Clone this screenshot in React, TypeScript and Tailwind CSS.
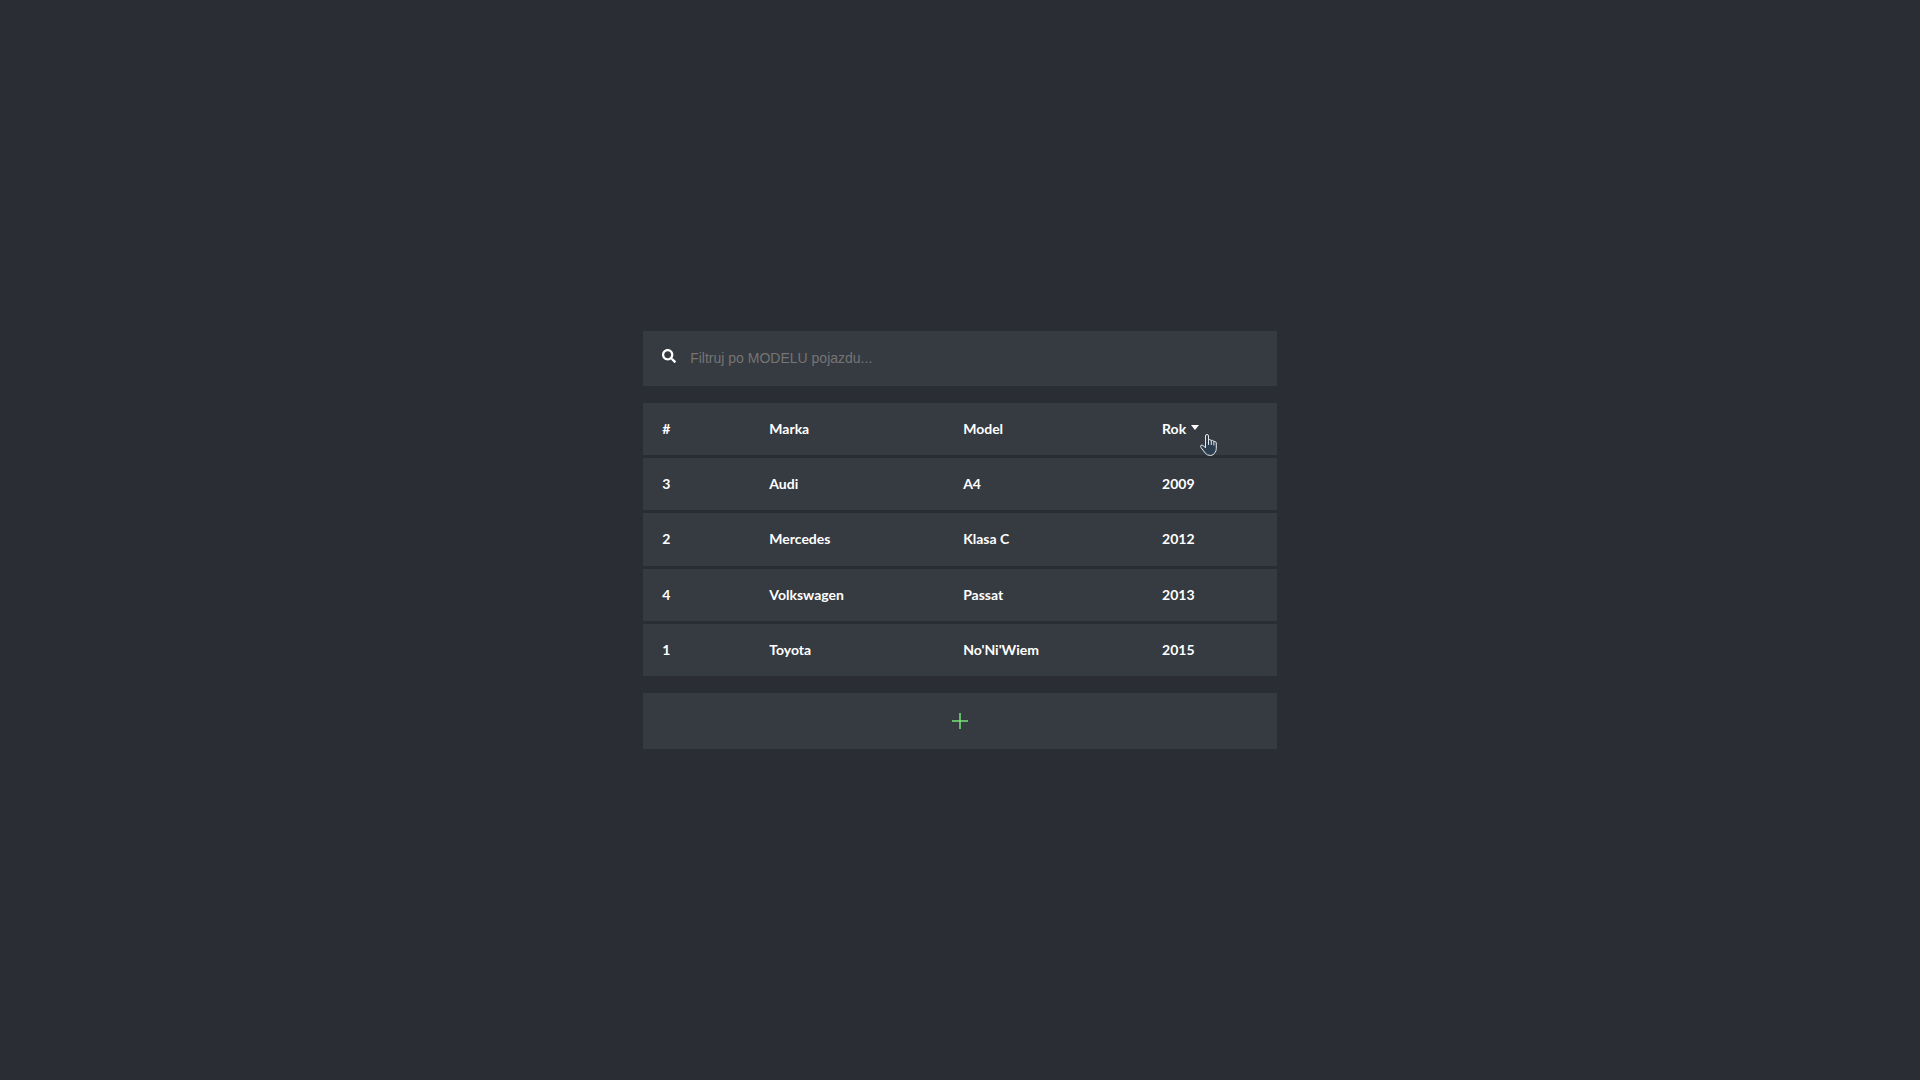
import { useState } from "react";
import { FaSearch } from "react-icons/fa";

type Vehicle = { id: number; brand: string; model: string; year: number };

const vehicles: Vehicle[] = [
  { id: 3, brand: "Audi", model: "A4", year: 2009 },
  { id: 2, brand: "Mercedes", model: "Klasa C", year: 2012 },
  { id: 4, brand: "Volkswagen", model: "Passat", year: 2013 },
  { id: 1, brand: "Toyota", model: "No'Ni'Wiem", year: 2015 },
];

function HandPointer() {
  return (
    <svg
      aria-hidden="true"
      viewBox="0 0 17 22"
      className="pointer-events-none absolute top-[15px] left-[38px] h-[22px] w-[17px]"
      fill="#2c3e50"
      stroke="#e3e7ea"
      strokeWidth="1"
      strokeLinejoin="round"
      strokeLinecap="round"
    >
      <path d="M5.5 13.5V2Q5.500 .5 7 .5T8.500 2V6.500Q8.800 5.500 9.800 5.500T11.300 7Q11.500 6.200 12.500 6.300T13.900 7.800Q14.300 7.200 15.200 7.500T16.300 9V14.500Q16.300 17 15 18.500Q13.500 21.500 10.500 21.500Q7 21.500 5.200 19L1 13.500Q0 12 1 11.300T3.500 11.800Z" />
      <path fill="none" d="M8.500 6.500V10.500M11.300 7V10.500M13.900 7.800V11" />
    </svg>
  );
}

export default function App() {
  const [query, setQuery] = useState("");
  const rows = vehicles.filter((v) => v.model.toLowerCase().includes(query.toLowerCase()));

  return (
    <main className="flex min-h-screen items-center justify-center bg-[#2b2d35] font-['Lato',sans-serif] text-sm font-bold text-white">
      <div className="flex w-[33%] flex-col">
        <label className="flex h-[55px] items-center bg-[#363a41] px-[19px] pb-0.5">
          <FaSearch aria-hidden="true" className="mb-1 size-3.5 shrink-0" />
          <input
            type="text"
            aria-label="Filtruj po MODELU pojazdu"
            placeholder="Filtruj po MODELU pojazdu..."
            value={query}
            onChange={(e) => setQuery(e.target.value)}
            className="ml-3.5 min-w-0 flex-1 bg-transparent font-['Liberation_Sans',sans-serif] font-normal outline-none placeholder:text-[#757575]"
          />
        </label>

        <table className="my-3.5 h-[279px] w-full table-fixed border-separate border-spacing-x-0 border-spacing-y-[3px] text-left">
          <colgroup>
            <col className="w-[16.9%]" />
            <col className="w-[30.6%]" />
            <col className="w-[31.4%]" />
            <col />
          </colgroup>
          <thead>
            <tr className="h-[52px] bg-[#363a41]">
              <th scope="col" className="px-[19px]">#</th>
              <th scope="col" className="px-[19px]">Marka</th>
              <th scope="col" className="px-[19px]">Model</th>
              <th scope="col" className="px-[19px]">
                <button type="button" className="relative flex cursor-pointer items-center gap-[5px]">
                  Rok
                  <svg aria-hidden="true" viewBox="0 0 8 5" className="mb-1 h-[5px] w-2" fill="currentColor">
                    <path d="M0 0H8L4 5Z" />
                  </svg>
                  <HandPointer />
                </button>
              </th>
            </tr>
          </thead>
          <tbody>
            {rows.map((v) => (
              <tr key={v.id} className="h-[52px] bg-[#363a41]">
                <td className="px-[19px]">{v.id}</td>
                <td className="px-[19px]">{v.brand}</td>
                <td className="px-[19px]">{v.model}</td>
                <td className="px-[19px]">{v.year}</td>
              </tr>
            ))}
          </tbody>
        </table>

        <button
          type="button"
          aria-label="Dodaj pojazd"
          className="flex h-14 cursor-pointer items-center justify-center bg-[#363a41] text-[#76e476]"
        >
          <svg aria-hidden="true" viewBox="0 0 16 16" className="size-4" fill="none" stroke="currentColor" strokeWidth="1.5">
            <path d="M8 0V16M0 8H16" />
          </svg>
        </button>
      </div>
    </main>
  );
}
